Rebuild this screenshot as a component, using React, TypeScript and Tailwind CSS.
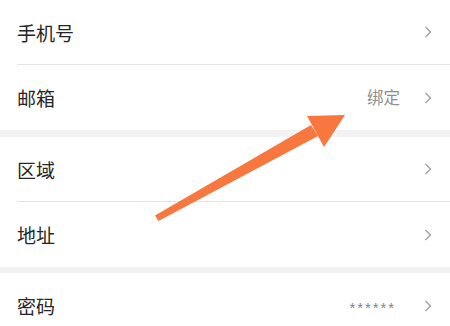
import React from "react";

const Chevron = () => (
  <svg width="8" height="12" viewBox="0 0 8 12" className="shrink-0">
    <path d="M1.5 1 L6.5 6 L1.5 11" fill="none" stroke="#9a9a9a" strokeWidth="1.2" />
  </svg>
);

const Row = ({ label, value, valueClass, divider }: { label: string; value?: string; valueClass?: string; divider?: boolean }) => (
  <div className="pl-[17px] bg-white">
    <div className={`flex items-center h-[65px] pr-[18px] ${divider ? "border-b border-[#e3e3e3]" : ""}`}>
      <span className="text-[19px] text-[#262626] leading-none">{label}</span>
      <div className="ml-auto flex items-center">
        {value && <span className={valueClass}>{value}</span>}
        <Chevron />
      </div>
    </div>
  </div>
);

export default function App() {
  return (
    <div
      className="relative w-[450px] h-[326px] overflow-hidden bg-white"
      style={{ fontFamily: '"Noto Sans CJK SC", "Noto Sans", sans-serif' }}
    >
      <Row label="手机号" divider />
      <Row label="邮箱" value="绑定" valueClass="text-[16.5px] text-[#8e8e8e] mr-[24px] leading-none" />
      <div className="h-[7px] bg-[#f2f2f2]" />
      <Row label="区域" divider />
      <Row label="地址" />
      <div className="h-[6px] bg-[#f2f2f2]" />
      <Row
        label="密码"
        value="******"
        valueClass="text-[15px] text-[#858585] mr-[28px] tracking-[1.9px] leading-none mt-[3px] [font-family:'Liberation_Sans',sans-serif]"
      />
      <svg className="absolute left-0 top-0 pointer-events-none" width="450" height="326" viewBox="0 0 450 326">
        <polygon points="155,215.5 158.5,221 318,136 311,125" fill="#f7773e" />
        <polygon points="307,116 345,115 324,147" fill="#f7773e" />
      </svg>
    </div>
  );
}
